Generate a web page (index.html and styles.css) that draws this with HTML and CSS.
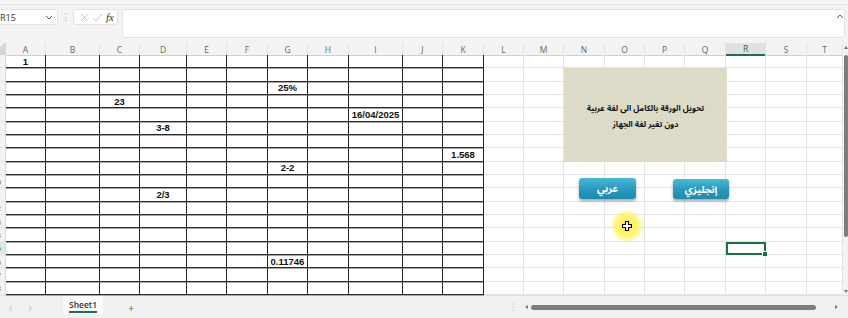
FILE: index.html
```html
<!DOCTYPE html>
<html lang="en">
<head>
  <meta charset="UTF-8">
  <title>Sheet1</title>
<link rel="stylesheet" href="styles.css">
</head>
<body>
<div class="ribbon-edge"></div>
<div class="formula-row">
  <div class="namebox">
    <span>R15</span>
    <svg width="8" height="5" viewBox="0 0 8 5"><path d="M1 1l3 3 3-3" fill="none" stroke="#555" stroke-width="1"/></svg>
  </div>
  <span class="grip">⁝</span>
  <div class="fx-box">
    <svg width="9" height="9" viewBox="0 0 9 9"><path d="M1 1l7 7M8 1l-7 7" stroke="#c4c4c4" stroke-width="1"/></svg>
    <svg width="11" height="9" viewBox="0 0 11 9"><path d="M1 5l3 3 6-7" fill="none" stroke="#c4c4c4" stroke-width="1"/></svg>
    <span class="fx">fx</span>
  </div>
  <div class="formula-input">
    <svg width="8" height="5" viewBox="0 0 8 5"><path d="M1 4l3-3 3 3" fill="none" stroke="#555" stroke-width="1"/></svg>
  </div>
</div>
<div class="sheet">
  <div class="row-heads" id="rowHeads"><div class="corner"></div></div>
  <div class="main">
    <div class="col-heads" id="colHeads"></div>
    <div class="grid" id="grid"></div>

    <div class="shape note">
      <p>تحويل الورقة بالكامل الى لغة عربية<br>دون تغير لغة الجهاز</p>
    </div>
    <div class="shape btn btn-ar">عربي</div>
    <div class="shape btn btn-en">إنجليزي</div>
    <div class="shape pointer">
      <svg width="10" height="10" viewBox="0 0 10 10"><path d="M3.5 0.5h3v3h3v3h-3v3h-3v-3h-3v-3h3z" fill="#fff" stroke="#000" stroke-width="1.2" stroke-linejoin="round"/></svg>
    </div>
  </div>
  <div class="vscroll">
    <span class="arr-up"></span>
    <span class="vthumb"></span>
    <span class="arr-down"></span>
  </div>
</div>
<div class="tabs">
  <span class="nav">‹</span>
  <span class="nav">›</span>
  <div class="tab"><span>Sheet1</span></div>
  <span class="add">+</span>
  <span class="spacer"></span>
  <span class="grip grip-low">⁝</span>
  <span class="arr-left"></span>
  <span class="hthumb"></span>
  <span class="arr-right"></span>
</div>
<script>
const cols = 'ABCDEFGHIJKLMNOPQRST'.split('')
const boxed = 'ABCDEFGHIJK' // 带边框的表格区域
const values = {
  A1: '1', G3: '25%', C4: '23', I5: '16/04/2025', D6: '3-8',
  K8: '1.568', G9: '2-2', D11: '2/3', G16: '0.11746'
}
const active = 'R15'

const colHeads = document.getElementById('colHeads')
const rowHeads = document.getElementById('rowHeads')
const grid = document.getElementById('grid')

cols.forEach(c => {
  const h = document.createElement('div')
  h.className = 'ch' + (active[0] === c ? ' sel' : '')
  h.textContent = c
  colHeads.appendChild(h)
})

for (let r = 1; r <= 18; r++) {
  const rh = document.createElement('div')
  rh.className = 'rh' + (active.slice(1) == r ? ' sel' : '')
  rh.textContent = r
  rowHeads.appendChild(rh)
  cols.forEach(c => {
    const cell = document.createElement('div')
    const id = c + r
    cell.className = 'cell' + (boxed.includes(c) ? ' b' : '') + (id === active ? ' active' : '')
    if (values[id]) cell.textContent = values[id]
    grid.appendChild(cell)
  })
}
</script>
</body>
</html>
```

FILE: styles.css
```css
* {
  box-sizing: border-box;
}
body {
  margin: 0;
  width: 848px;
  height: 318px;
  overflow: hidden;
  background: #f3f3f3;
  font-family: "Open Sans", "Noto Sans", sans-serif;
  color: #222;
}
.ribbon-edge {
  height: 5px;
  border-bottom: 1px solid #e2e2e2;
  background: #f6f6f6;
}
.formula-row {
  height: 38px;
  display: flex;
  align-items: flex-start;
  padding: 4px 3px 0 0;
}
.namebox {
  width: 64px;
  height: 16px;
  margin-left: -6px;
  padding: 0 4px 0 5px;
  background: #fff;
  border: 1px solid #e3e3e3;
  border-radius: 3px;
  display: flex;
  align-items: center;
  justify-content: space-between;
  font-size: 9px;
  color: #333;
}
.grip {
  width: 15px;
  text-align: center;
  font-size: 10px;
  line-height: 16px;
  color: #bbb;
}
.fx-box {
  width: 45px;
  height: 16px;
  background: #fff;
  border: 1px solid #e3e3e3;
  border-radius: 3px;
  display: flex;
  align-items: center;
  justify-content: space-between;
  padding: 0 3px 0 6px;
}
.fx {
  font-family: "Liberation Serif", serif;
  font-style: italic;
  font-size: 11px;
  color: #333;
}
.formula-input {
  flex: 1;
  margin-left: 4px;
  height: 29px;
  background: #fff;
  border: 1px solid #e3e3e3;
  border-radius: 3px;
  display: flex;
  justify-content: flex-end;
  padding: 4px 0 0 0;
}
.sheet {
  display: flex;
  height: 252px;
}
.row-heads {
  width: 18px;
  margin-left: -12px;
  display: grid;
  grid-template-rows: 12px repeat(18, 1fr);
  border-right: 1px solid #d8d8d8;
}
.corner {
  border-bottom: 1px solid #d0d0d0;
  background: linear-gradient(135deg, transparent 60%, #d6d6d6 60%);
}
.rh {
  font-size: 8px;
  color: #666;
  display: flex;
  align-items: center;
  justify-content: center;
  border-bottom: 1px solid #e6e6e6;
}
.rh.sel {
  color: #1e7145;
  background: #e3e3e3;
}
.main {
  position: relative;
  width: 837px;
}
.col-heads, .grid {
  display: grid;
  grid-template-columns: 40px 54px 40px 47px 40px 41px 40px 41px 54px 40px 41px 40px 40px 41px 40px 40px 41px 40px 41px 36px;
}
.col-heads {
  height: 12px;
}
.ch {
  font-size: 8.5px;
  color: #666;
  display: flex;
  align-items: center;
  justify-content: center;
  border-right: 1px solid #e2e2e2;
  border-bottom: 1px solid #d0d0d0;
}
.ch.sel {
  background: #e1e1e1;
  color: #1e7145;
  border-bottom: 2px solid #1e7145;
}
.grid {
  height: 240px;
  grid-template-rows: repeat(18, 1fr);
  background: #fff;
}
.cell {
  border-right: 1px solid #e3e3e3;
  border-bottom: 1px solid #e3e3e3;
  font-family: "Liberation Sans", Arial, sans-serif;
  font-weight: bold;
  font-size: 9.5px;
  color: #111;
  display: flex;
  align-items: center;
  justify-content: center;
  white-space: nowrap;
}
.cell.b {
  border-right-color: #222;
  border-bottom-color: #2a2a2a;
  box-shadow: 0 1px 0 #a8a8a8;
}
.cell.active {
  position: relative;
  box-shadow: inset 0 0 0 1px #1e7145;
  border: 1px solid #1e7145;
}
.cell.active::after {
  content: '';
  position: absolute;
  right: -3px;
  bottom: -3px;
  width: 4px;
  height: 4px;
  background: #1e7145;
  border: 1px solid #fff;
}
.shape {
  position: absolute;
}
.note {
  left: 558px;
  top: 25px;
  width: 163px;
  height: 94px;
  padding-top: 3px;
  background: #dddac8;
  display: flex;
  align-items: center;
  justify-content: center;
}
.note p {
  margin: 0;
  direction: rtl;
  text-align: center;
  font-family: "Noto Sans Arabic", "Noto Naskh Arabic", "DejaVu Sans", sans-serif;
  font-weight: bold;
  font-size: 8px;
  line-height: 16px;
  color: #111;
}
.btn {
  top: 135px;
  height: 21px;
  border-radius: 3px;
  background: linear-gradient(#4bbad8, #2b9abd 50%, #1f8aad);
  box-shadow: 0 2px 3px rgba(0, 0, 0, .35);
  color: #fff;
  font-family: "Noto Sans Arabic", "DejaVu Sans", sans-serif;
  font-weight: bold;
  font-size: 10px;
  display: flex;
  align-items: center;
  justify-content: center;
}
.btn-ar {
  left: 573px;
  width: 57px;
}
.btn-en {
  left: 667px;
  top: 136px;
  width: 56px;
  height: 20px;
}
.pointer {
  left: 604px;
  top: 166px;
  width: 34px;
  height: 34px;
  border-radius: 50%;
  background: radial-gradient(circle, rgba(255, 240, 60, .95) 0, rgba(255, 242, 90, .8) 45%, rgba(255, 245, 120, 0) 72%);
  display: flex;
  align-items: center;
  justify-content: center;
}
.vscroll {
  width: 5px;
  position: relative;
  display: flex;
  flex-direction: column;
  align-items: center;
  padding-top: 3px;
}
.arr-up, .arr-down {
  width: 0;
  height: 0;
  border-left: 2.5px solid transparent;
  border-right: 2.5px solid transparent;
}
.arr-up {
  border-bottom: 3px solid #777;
}
.arr-down {
  margin-top: auto;
  margin-bottom: 2px;
  border-top: 3px solid #777;
}
.vthumb {
  width: 4px;
  height: 182px;
  margin-top: 6px;
  border-radius: 2px;
  background: #7d7d7d;
}
.tabs {
  height: 23px;
  display: flex;
  align-items: center;
  background: #f0f0f0;
  border-top: 1px solid #e0e0e0;
}
.nav {
  width: 19px;
  text-align: center;
  font-size: 13px;
  color: #c4c4c4;
  margin-left: 1px;
}
.tab {
  margin-left: 23px;
  width: 40px;
  height: 18px;
  align-self: flex-start;
  background: #fbfbfb;
  display: flex;
  justify-content: center;
  padding-top: 3px;
}
.tab span {
  font-size: 8.5px;
  font-weight: 600;
  color: #333;
  height: 14px;
  border-bottom: 2px solid #1e7145;
}
.add {
  margin-left: 25px;
  font-size: 11px;
  color: #666;
}
.spacer {
  flex: 1;
}
.grip-low {
  width: 8px;
  line-height: 10px;
  color: #ccc;
}
.arr-left, .arr-right {
  width: 0;
  height: 0;
  border-top: 2.5px solid transparent;
  border-bottom: 2.5px solid transparent;
}
.arr-left {
  margin-left: 8px;
  border-right: 3px solid #777;
}
.hthumb {
  width: 285px;
  height: 5px;
  margin-left: 3px;
  border-radius: 3px;
  background: #7d7d7d;
}
.arr-right {
  margin-left: 19px;
  margin-right: 10px;
  border-left: 3px solid #777;
}
```
